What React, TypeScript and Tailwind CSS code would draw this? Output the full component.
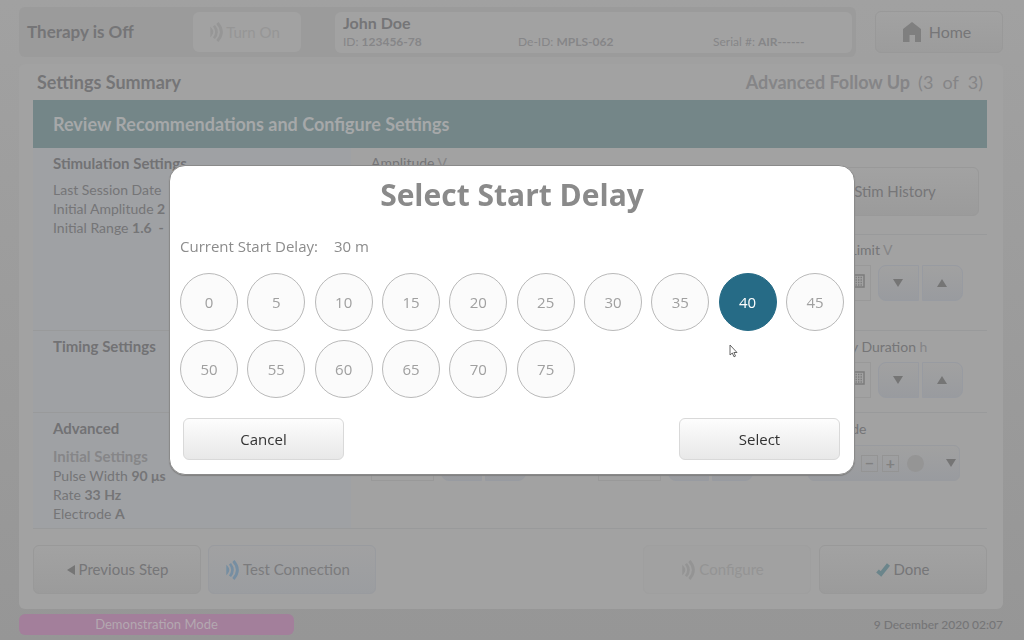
import { useState, type ReactNode } from "react";

const DELAYS = Array.from({ length: 16 }, (_, i) => i * 5);

function Waves({ className }: { className?: string }) {
  return (
    <svg viewBox="0 0 14 20" className={className} fill="none" stroke="currentColor" aria-hidden="true">
      <path d="M1 6.6 Q4.2 10 1 13.4 Z" fill="currentColor" strokeWidth="1.4" />
      <path d="M4 3.8 Q9 10 4 16.2" strokeWidth="2.6" />
      <path d="M7.4 1 Q15.4 10 7.4 19" strokeWidth="2.8" />
    </svg>
  );
}

function Triangle({ dir }: { dir: "up" | "down" | "left" }) {
  const d = { up: "M0 9 L5 1 L10 9 Z", down: "M0 1 L10 1 L5 9 Z", left: "M9 0 L9 10 L1 5 Z" }[dir];
  return (
    <svg viewBox="0 0 10 10" className="size-2.5 shrink-0 fill-[#757575]" aria-hidden="true">
      <path d={d} />
    </svg>
  );
}

function Keypad() {
  return (
    <svg viewBox="0 0 13 14" className="h-[14px] w-[13px]" aria-hidden="true">
      <rect x="1" y="1" width="11" height="12" fill="#a2a2a2" stroke="#7c7c7c" strokeWidth="1.5" />
      <path
        d="M3.5 3.5h1.4M6 3.5h1.4M8.5 3.5h1.4M3.5 6h1.4M6 6h1.4M8.5 6h1.4M3.5 8.5h1.4M6 8.5h1.4M8.5 8.5h1.4M3.5 11h1.4M6 11h1.4M8.5 11h1.4"
        stroke="#7c7c7c"
        strokeWidth="1.3"
      />
    </svg>
  );
}

function Stepper({ label, keypad }: { label: string; keypad?: boolean }) {
  const side =
    "flex h-9 w-[41px] items-center justify-center border border-[#989ba1] bg-linear-to-b from-[#a1a1a1] to-[#999b9f]";
  return (
    <div className="flex">
      <div className="relative mr-[7px] w-[63px]">
        <input aria-label={label} className="h-9 w-full border border-[#999999] bg-[#a2a2a2] px-2" />
        {keypad && (
          <span className="absolute top-[9px] right-1.5">
            <Keypad />
          </span>
        )}
      </div>
      <button type="button" aria-label={`Decrease ${label}`} className={`${side} mr-[3px] rounded-l-lg`}>
        <Triangle dir="down" />
      </button>
      <button type="button" aria-label={`Increase ${label}`} className={`${side} rounded-r-lg`}>
        <Triangle dir="up" />
      </button>
    </div>
  );
}

function ActionButton({ children, tone = "plain" }: { children: ReactNode; tone?: "plain" | "blue" | "off" }) {
  const tones = {
    plain: "border-[#999999] bg-linear-to-b from-[#a2a2a2] to-[#9b9b9b] text-[#767678]",
    blue: "border-[#999b9f] bg-linear-to-b from-[#a1a1a2] to-[#9b9da0] pr-2 text-[#7b7b7d]",
    off: "border-[#9f9f9f] bg-[#a1a1a1] pr-2 text-[#949494]",
  };
  return (
    <button
      type="button"
      disabled={tone === "off"}
      className={`flex h-[49px] w-[168px] items-center justify-center gap-[3px] rounded-md border text-[15px] ${tones[tone]}`}
    >
      {children}
    </button>
  );
}

function SideCell({ title, children, className }: { title: string; children?: ReactNode; className: string }) {
  return (
    <div className={`w-1/3 shrink-0 bg-[#9fa1a4] pl-5 text-sm leading-[19px] text-[#757577] ${className}`}>
      <h3 className="text-[15px] leading-5 font-bold text-[#727274]">{title}</h3>
      {children}
    </div>
  );
}

function Background() {
  const cols = "grid grid-cols-[227fr_210fr_179fr] pl-5";
  return (
    <div className="flex min-h-screen flex-col bg-linear-to-b from-[#a1a1a1] to-[#969696] pt-[7px] pr-[21px] pl-[19px] font-['Lato','Open_Sans',sans-serif] text-[#757577]">
      <header className="flex items-start justify-between gap-[19px]">
        <div className="flex h-[50px] flex-1 items-center rounded-md bg-[#9b9b9b] pr-1">
          <p className="w-[174px] pl-2 text-[17px] font-bold text-[#757577]">Therapy is Off</p>
          <button
            type="button"
            disabled
            className="mr-[34px] flex h-10 w-[108px] items-center justify-center gap-0.5 rounded-md bg-[#a2a2a2] pr-1 text-[15px] text-[#969696]"
          >
            <Waves className="h-5 w-3.5" />
            Turn On
          </button>
          <div className="h-[41px] flex-1 rounded-md bg-[#a2a2a2] px-2 text-xs text-[#868688]">
            <h1 className="text-base leading-[22px] font-bold text-[#757577]">John Doe</h1>
            <div className="flex leading-4">
              <p className="w-[175px]">
                ID: <b>123456-78</b>
              </p>
              <p className="w-[195px]">
                De-ID: <b>MPLS-062</b>
              </p>
              <p>
                Serial #: <b>AIR------</b>
              </p>
            </div>
          </div>
        </div>
        <button
          type="button"
          className="mt-1 flex h-[42px] w-32 items-center justify-center gap-2 rounded-md border border-[#999999] bg-linear-to-b from-[#a2a2a2] to-[#9c9c9c] pr-1 text-base text-[#767678]"
        >
          <svg viewBox="0 0 18 20" className="h-5 w-[18px] fill-[#7f7f7f]" aria-hidden="true">
            <path d="M9 0 L18 7 V20 H12 V13 H6.5 V20 H0 V7 Z" />
          </svg>
          Home
        </button>
      </header>

      <main className="mt-[7px] rounded-md bg-[#a2a2a2] px-4 pb-[15px] pl-3.5">
        <div className="flex h-9 items-center justify-between px-1 text-lg">
          <h2 className="font-bold text-[#757577]">Settings Summary</h2>
          <p className="text-[#858587]">
            <b>Advanced Follow Up</b>
            <span className="ml-2">(3&nbsp; of &nbsp;3)</span>
          </p>
        </div>
        <h2 className="flex h-12 items-center bg-[#748688] pl-5 text-lg font-bold text-[#a6a8a9]">
          Review Recommendations and Configure Settings
        </h2>

        <section className="flex h-[183px] border-b border-[#999a9b]">
          <SideCell title="Stimulation Settings" className="pt-[5px]">
            <div className="mt-[7px]">
              <p>
                Last Session Date <b className="ml-1">9</b>
              </p>
              <p>
                Initial Amplitude <b>2</b>
              </p>
              <p>
                Initial Range <b>1.6 &nbsp;-</b>
              </p>
            </div>
          </SideCell>
          <div className="flex-1">
            <div className="flex h-[87px] items-start justify-between border-b border-[#999a9b] pt-[5px] pr-2 pl-5">
              <p className="text-sm leading-5">
                Amplitude <span className="text-[#858587]">V</span>
              </p>
              <div className="pt-3.5">
                <ActionButton>Stim History</ActionButton>
              </div>
            </div>
            <div className={`${cols} pt-[5px]`}>
              <div className="col-start-3">
                <p className="mb-[5px] text-sm leading-5">
                  Upper Limit <span className="text-[#858587]">V</span>
                </p>
                <Stepper label="Upper Limit" keypad />
              </div>
            </div>
          </div>
        </section>

        <section className="flex h-[82px] border-b border-[#999a9b]">
          <SideCell title="Timing Settings" className="pt-[5px]" />
          <div className={`${cols} flex-1 pt-1.5`}>
            <div className="col-start-3">
              <p className="mb-[5px] text-sm leading-5">
                Therapy Duration <span className="text-[#858587]">h</span>
              </p>
              <Stepper label="Therapy Duration" keypad />
            </div>
          </div>
        </section>

        <section className="flex h-[116px] border-b border-[#999a9b]">
          <SideCell title="Advanced" className="pt-[5px]">
            <div className="mt-2">
              <h4 className="text-[15px] leading-5 font-bold text-[#868688]">Initial Settings</h4>
              <p>
                Pulse Width <b>90 μs</b>
              </p>
              <p>
                Rate <b>33 Hz</b>
              </p>
              <p>
                Electrode <b>A</b>
              </p>
            </div>
          </SideCell>
          <div className={`${cols} flex-1 pt-1.5`}>
            <div className="pt-[26px]">
              <Stepper label="Pulse Width" />
            </div>
            <div className="pt-[26px]">
              <Stepper label="Rate" />
            </div>
            <div>
              <p className="mb-1.5 text-sm leading-5">Electrode</p>
              <button
                type="button"
                aria-label="Electrode"
                className="flex h-9 w-[152px] items-center justify-end gap-1 rounded-md border border-[#999b9f] bg-linear-to-b from-[#a1a1a1] to-[#999b9f] pr-[3px]"
              >
                {["−", "+"].map((sign) => (
                  <span
                    key={sign}
                    className="flex size-[17px] items-center justify-center border border-[#949494] text-base leading-none font-bold text-[#808080]"
                  >
                    {sign}
                  </span>
                ))}
                <span className="mr-[18px] ml-1 size-[17px] rounded-full bg-[#959595]" />
                <Triangle dir="down" />
              </button>
            </div>
          </div>
        </section>

        <div className="flex justify-between pt-4">
          <div className="flex gap-[7px]">
            <ActionButton>
              <Triangle dir="left" />
              Previous Step
            </ActionButton>
            <ActionButton tone="blue">
              <Waves className="h-5 w-3.5 text-[#768ea2]" />
              Test Connection
            </ActionButton>
          </div>
          <div className="flex gap-2">
            <ActionButton tone="off">
              <Waves className="h-5 w-3.5" />
              Configure
            </ActionButton>
            <ActionButton>
              <svg viewBox="0 0 14 14" className="size-3.5" fill="none" stroke="#6b858b" strokeWidth="4" aria-hidden="true">
                <path d="M1.5 8 L5 11 L12.5 1.5" />
              </svg>
              Done
            </ActionButton>
          </div>
        </div>
      </main>

      <footer className="flex items-center justify-between pt-[5px] pb-1 text-[13px] leading-[21px]">
        <p className="w-[275px] rounded-md bg-[#a37f9b] text-center text-[#b3a8b0]">Demonstration Mode</p>
        <p className="text-xs font-medium text-[#757577]">9 December 2020 02:07</p>
      </footer>
    </div>
  );
}

export default function App() {
  const [selected, setSelected] = useState(40);
  const action =
    "h-[42px] w-[161px] rounded-md border border-[#d9d9d9] bg-linear-to-b from-[#fdfdfd] to-[#e8e8e8] text-[15px] text-[#333333]";
  return (
    <div className="relative">
      <Background />
      <div className="fixed inset-0 flex items-center justify-center">
        <div
          role="dialog"
          aria-modal="true"
          aria-labelledby="dialog-title"
          className="relative w-[686px] rounded-2xl border border-[#8a8a8a] bg-white px-2.5 pb-3.5 font-['Open_Sans','Noto_Sans',sans-serif] text-[#8c8c8c] shadow-[0_1px_1px_#808080]"
        >
          <h2 id="dialog-title" className="pt-2 text-center text-[30px] leading-[42px] font-bold text-[#8a8a8a]">
            Select Start Delay
          </h2>
          <p className="mt-5 text-[15px] leading-5">
            Current Start Delay:<span className="ml-4">30 m</span>
          </p>
          <div className="mt-[17px] grid grid-cols-[repeat(10,58px)] justify-between gap-y-[9px]">
            {DELAYS.map((delay) => (
              <button
                key={delay}
                type="button"
                aria-pressed={delay === selected}
                onClick={() => setSelected(delay)}
                className={`size-[58px] rounded-full border text-[15px] ${
                  delay === selected
                    ? "border-[#266b86] bg-[#266b86] text-white"
                    : "border-[#b9b9b9] bg-[#fbfbfb] text-[#a0a0a0]"
                }`}
              >
                {delay}
              </button>
            ))}
          </div>
          <div className="mt-5 flex justify-between pr-1 pl-[3px]">
            <button type="button" className={action}>
              Cancel
            </button>
            <button type="button" className={action}>
              Select
            </button>
          </div>
          <svg viewBox="0 0 9 14" className="absolute top-[178px] left-[559px] h-3.5 w-[9px]" aria-hidden="true">
            <path
              d="M1 1 V11 L3.3 9 L5 12.8 L6.5 12.1 L4.9 8.5 H8 Z"
              fill="#ffffff"
              stroke="#555555"
              strokeWidth="0.9"
            />
          </svg>
        </div>
      </div>
    </div>
  );
}
